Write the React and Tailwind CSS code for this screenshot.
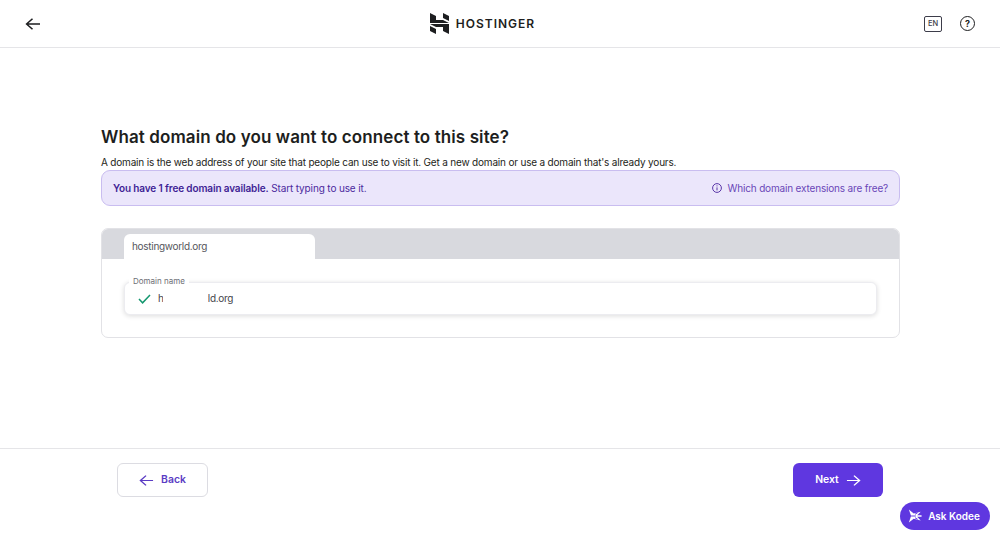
import React from "react";

function Logo() {
  return (
    <svg width="19" height="21" viewBox="0 0 19 21" fill="#1d1e20">
      <path d="M0 0 L6 3 V7 H13 L19 10 H0 Z" />
      <path d="M13 0 L19 3 V8 L13 5 Z" />
      <path d="M19 21 L13 18 V14 H6 L0 11 H19 Z" />
      <path d="M6 21 L0 18 V13 L6 16 Z" />
    </svg>
  );
}

function Kodee() {
  return (
    <svg width="14" height="14" viewBox="0 0 16 15" fill="#fff">
      <path d="M1 0 L6.5 4.5 L14.5 2.5 L10.5 6.6 H15.5 V8.4 H10.5 L14.5 12.5 L6.5 10.5 L1 15 L3.5 7.5 Z" />
      <path d="M3.5 7.5 H9 M8 5.5 L11 3.8 M8 9.5 L11 11.2" stroke="#5f37e0" strokeWidth="1.1" fill="none" />
    </svg>
  );
}

function Arrow({ dir, color, size = 16, w = 16 }) {
  return (
    <svg width={w} height={size} viewBox="0 0 16 16" fill="none" stroke={color} strokeWidth="1.5" preserveAspectRatio="none">
      {dir === "left" ? <path d="M15 8H1.5M7.5 2L1.5 8l6 6" /> : <path d="M1 8h13.5M8.5 2l6 6-6 6" />}
    </svg>
  );
}

export default function App() {
  return (
    <div className="relative flex h-[537px] w-[1000px] flex-col overflow-hidden bg-white font-['Inter',sans-serif] text-[#1d1e20]">
      <header className="flex h-[48px] shrink-0 items-center justify-between border-b border-[#e5e5e8] px-[25px]">
        <Arrow dir="left" color="#1d1e20" size={14} w={16} />
        <div className="flex items-center gap-[7px]">
          <Logo />
          <span className="text-[12px] font-semibold tracking-[1px]">HOSTINGER</span>
        </div>
        <div className="flex items-center gap-[18px]">
          <div className="flex h-[16px] w-[18px] items-center justify-center rounded-[2px] border-[1.5px] border-[#3d3d4a] text-[7.5px] font-medium text-[#3d3d4a]">EN</div>
          <div className="flex h-[15px] w-[15px] items-center justify-center rounded-full border-[1.7px] border-[#1d1e20] text-[9px] font-bold">?</div>
        </div>
      </header>

      <main className="flex flex-1 flex-col pl-[101px] pr-[100px] pt-[78px]">
        <h1 className="text-[17px] font-semibold leading-[22px] tracking-[0.1px]">What domain do you want to connect to this site?</h1>
        <p className="mt-[7px] text-[10px] leading-[14px] tracking-[-0.185px]">A domain is the web address of your site that people can use to visit it. Get a new domain or use a domain that's already yours.</p>
        <div className="mt-[1px] flex h-[36px] items-center justify-between rounded-[9px] border border-[#c9bdf0] bg-[#ebe6fb] pl-[11px] pr-[11px] text-[10px] tracking-[-0.13px] text-[#4c2a9e]">
          <p><span className="font-semibold text-[#3f1f95]">You have 1 free domain available.</span> Start typing to use it.</p>
          <div className="flex items-center gap-[6px] text-[#6a46b8]">
            <svg width="10" height="10" viewBox="0 0 10 10" fill="none" stroke="#5a36a8" strokeWidth="1">
              <circle cx="5" cy="5" r="4.4" />
              <path d="M5 4.4v3M5 2.4v1" />
            </svg>
            <span className="tracking-[-0.17px]">Which domain extensions are free?</span>
          </div>
        </div>

        <section className="mt-[22px] h-[110px] overflow-hidden rounded-[7px] border border-[#e2e2e6]">
          <div className="flex h-[30px] items-end bg-[#d8d9de] pl-[22px]">
            <div className="flex h-[25px] w-[191px] items-center rounded-t-[6px] bg-white pl-[8px] text-[10px] tracking-[-0.3px] text-[#55565c]">hostingworld.org</div>
          </div>
          <div className="px-[22px] pt-[23px]">
            <div className="relative flex h-[33px] items-center rounded-[6px] border border-[#ececf0] bg-white pl-[13px] text-[10px] tracking-[-0.3px] text-[#44454b] shadow-[0_1px_5px_rgba(0,0,0,0.14)]">
              <span className="absolute -top-[7px] left-[4px] bg-white px-[4px] text-[8px] leading-[11px] tracking-normal text-[#6d6e75]">Domain name</span>
              <svg width="13" height="10" viewBox="0 0 13 10" fill="none" stroke="#14976f" strokeWidth="1.5">
                <path d="M1 5l3.6 3.8L12 1" />
              </svg>
              <span className="relative ml-[7px]">
                hostingworld.org
                <span className="absolute left-[5px] top-0 h-full w-[45px] bg-white" />
              </span>
            </div>
          </div>
        </section>
      </main>

      <footer className="flex h-[89px] shrink-0 items-start justify-between border-t border-[#e5e5e8] px-[117px] pt-[14px]">
        <button className="flex h-[34px] w-[91px] items-center justify-center gap-[7px] rounded-[6px] border border-[#dcdce2] bg-white text-[10.4px] font-semibold text-[#5b3cc4]">
          <Arrow dir="left" color="#5b3cc4" size={13} w={15} />
          Back
        </button>
        <button className="flex h-[34px] w-[90px] items-center justify-center gap-[7px] rounded-[6px] bg-[#5f37e0] text-[10.4px] font-semibold text-white">
          Next
          <Arrow dir="right" color="#fff" size={13} w={15} />
        </button>
      </footer>

      <button className="absolute left-[900px] top-[502px] flex h-[28px] w-[90px] items-center justify-center gap-[6px] rounded-full bg-[#5f37e0] pr-[2px] text-[10px] font-semibold text-white">
        <Kodee />
        Ask Kodee
      </button>
    </div>
  );
}
